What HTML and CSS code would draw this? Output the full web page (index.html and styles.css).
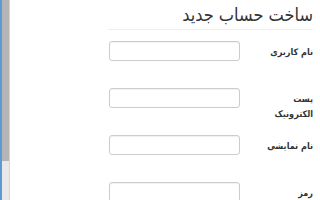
FILE: index.html
```html
<!DOCTYPE html>
<html lang="fa" dir="rtl">

<head>
  <meta charset="utf-8">
  <title>ساخت حساب جدید</title>
  <link rel="stylesheet" href="styles.css">
</head>

<body>

  <div class="page">
    <div class="content">
      <div class="panel">
        <h1 class="title">ساخت حساب جدید</h1>

        <form class="signup-form">
          <div class="form-row">
            <label for="username">نام کاربری</label>
            <input type="text" id="username">
          </div>
          <div class="form-row">
            <label for="email">پست الکترونیک</label>
            <input type="text" id="email">
          </div>
          <div class="form-row">
            <label for="display-name">نام نمایشی</label>
            <input type="text" id="display-name">
          </div>
          <div class="form-row">
            <label for="password">رمز</label>
            <input type="password" id="password">
          </div>
        </form>
      </div>
    </div>

    <div class="side-scroll">
      <div class="side-thumb"></div>
    </div>
  </div>

</body>

</html>
```

FILE: styles.css
```css
html,
body {
  margin: 0;
  height: 200px;
  overflow: hidden;
  background-color: white;
}

body {
  font-family: "DejaVu Sans Condensed", "DejaVu Sans", sans-serif;
  color: #333;
}

.page {
  display: flex;
  height: 200px;
}

.content {
  flex: 1;
}

.panel {
  width: 205px;
  margin-right: 5px;
  padding-right: 2px;
}

.title {
  margin: 0;
  padding-top: 1px;
  font-size: 18px;
  font-weight: normal;
  line-height: 28px;
  border-bottom: 1px solid #eee;
}

.signup-form {
  margin-top: 11px;
}

.form-row {
  display: flex;
  align-items: flex-start;
  min-height: 47px;
}

.form-row label {
  flex: 0 0 55px;
  padding-top: 4px;
  font-size: 9px;
  font-weight: bold;
  line-height: 15px;
}

.form-row input {
  box-sizing: border-box;
  width: 131px;
  height: 20px;
  margin: 0 18px 0 0;
  border: 1px solid #ccc;
  border-radius: 3px;
  box-shadow: inset 0 1px 1px rgba(0, 0, 0, 0.06);
}

.side-scroll {
  width: 7px;
  border-left: 2px solid #5b9bd5;
  border-right: 1px solid #d6d6d6;
  background-color: #e8e8e8;
}

.side-thumb {
  height: 161px;
  background-color: #b5b5b5;
}
```
